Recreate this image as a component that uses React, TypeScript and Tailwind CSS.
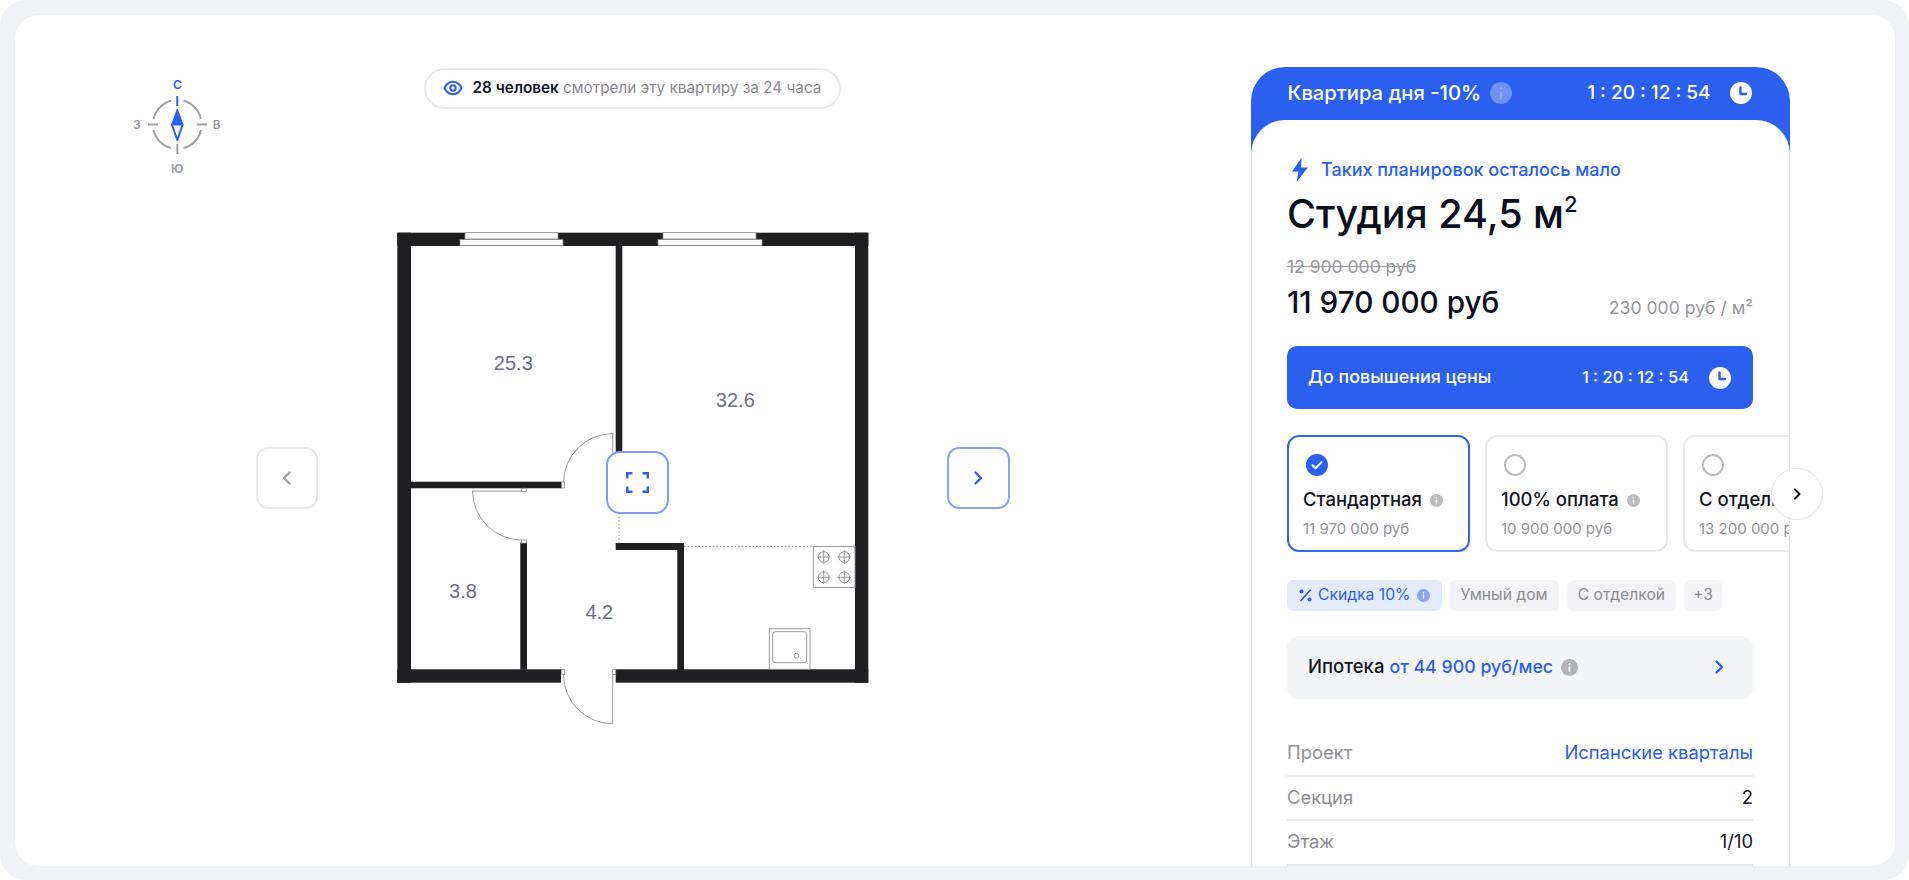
import React from "react";

const BLUE = "#2a5ff0";

function Info({ size, bg, fg = "#ffffff" }: { size: number; bg: string; fg?: string }) {
  return (
    <svg width={size} height={size} viewBox="0 0 20 20" className="shrink-0">
      <circle cx="10" cy="10" r="10" fill={bg} />
      <rect x="9" y="8.6" width="2" height="6.4" rx="1" fill={fg} />
      <circle cx="10" cy="6" r="1.25" fill={fg} />
    </svg>
  );
}

function Clock({ bg, fg }: { bg: string; fg: string }) {
  return (
    <svg width="22" height="22" viewBox="0 0 22 22" className="shrink-0">
      <circle cx="11" cy="11" r="11" fill={bg} />
      <path d="M10.500 5.500v6.500h5.500" fill="none" stroke={fg} strokeWidth="2.400" strokeLinecap="round" strokeLinejoin="round" />
    </svg>
  );
}

function Timer({ className }: { className: string }) {
  return <span className={className}>1 : 20 : 12 : 54</span>;
}

function Chevron({ dir, color, size = 24 }: { dir: "l" | "r"; color: string; size?: number }) {
  return (
    <svg width={size} height={size} viewBox="0 0 24 24" fill="none" stroke={color} strokeWidth="2.400" strokeLinecap="round" strokeLinejoin="round">
      <path d={dir === "r" ? "M9.500 6.500 15 12l-5.500 5.500" : "M14.500 6.500 9 12l5.500 5.500"} />
    </svg>
  );
}

function Compass() {
  const arc = "#a3a3a6";
  return (
    <svg width="120" height="108" viewBox="117 70 120 108" className="shrink-0">
      <g fill="none" stroke={arc} strokeWidth="2">
        <path d="M171 99.800A24 24 0 0 0 153.600 118" />
        <path d="M183.600 99.800A24 24 0 0 1 201 118" />
        <path d="M153.600 129A24 24 0 0 0 171 147" />
        <path d="M201 129A24 24 0 0 1 183.600 147" />
        <path d="M148 123.500h10M197 123.500h10M177.300 143v10" />
      </g>
      <path d="M177.300 95v10" stroke={BLUE} strokeWidth="2" />
      <path d="M177.300 108l5.600 15.500H171.700z" fill={BLUE} stroke={BLUE} strokeWidth="1" strokeLinejoin="round" />
      <path d="M171.900 123.500h10.800L177.300 139z" fill="#fff" stroke={BLUE} strokeWidth="2" strokeLinejoin="round" />
      <g fontSize="12" fontWeight="600" textAnchor="middle">
        <text x="177.300" y="88" fill={BLUE}>С</text>
        <text x="136.700" y="128" fill="#9b9ba0">З</text>
        <text x="216.700" y="128" fill="#9b9ba0">В</text>
        <text x="177.300" y="172" fill="#9b9ba0">Ю</text>
      </g>
    </svg>
  );
}

function Plan() {
  const wall = "#1f1f22";
  const thin = "#8f8f92";
  const burners: [number, number][] = [[823.7, 557], [844.3, 557], [823.7, 577.3], [844.3, 577.3]];
  return (
    <svg width="629" height="493" viewBox="318 232 629 493">
      <g fill={wall}>
        <rect x="397.300" y="232.700" width="471" height="13.300" />
        <rect x="397.300" y="232.700" width="13.700" height="450" />
        <rect x="855" y="232.700" width="13.300" height="450" />
        <rect x="397.300" y="669.300" width="163.700" height="13.400" />
        <rect x="615.700" y="669.300" width="252.600" height="13.400" />
        <rect x="615.700" y="246" width="6.600" height="220" />
        <rect x="411" y="481.700" width="150.700" height="6.600" />
        <rect x="520.300" y="542.700" width="6.700" height="127" />
        <rect x="615.700" y="543" width="68.300" height="7" />
        <rect x="677.300" y="543" width="6.700" height="127" />
      </g>
      <g fill="#fff" stroke={thin} strokeWidth="0.8">
        <rect x="465" y="232.700" width="93" height="6.300" />
        <rect x="460" y="239.600" width="103" height="5.800" />
        <rect x="663" y="232.700" width="93" height="6.300" />
        <rect x="658" y="239.600" width="104" height="5.800" />
        <rect x="561.700" y="482" width="3" height="6" />
        <rect x="521.500" y="488.300" width="5.200" height="3" />
        <rect x="521.500" y="540" width="5.200" height="3" />
        <rect x="561.700" y="669.500" width="3" height="5" />
        <rect x="612.700" y="669.500" width="3" height="5" />
      </g>
      <g fill="none" stroke={thin} strokeWidth="0.9">
        <path d="M563.500 482A49.500 49.500 0 0 1 612.700 433.500V482" />
        <path d="M521.700 491H472.500A49.500 49.500 0 0 0 521.700 540" />
        <path d="M563.500 675A49 49 0 0 0 612.700 723.700V675" />
        <path d="M684 546.400H813.300M619 513V543" strokeDasharray="1.600 2" />
        <rect x="813.300" y="546.400" width="41.700" height="41" />
        <rect x="769.300" y="628.700" width="40.700" height="40.600" />
        <rect x="772.700" y="631.700" width="34" height="31" rx="2.500" />
        <circle cx="796.300" cy="655.700" r="2.400" />
        {burners.map(([x, y]) => (
          <g key={x + "-" + y}>
            <circle cx={x} cy={y} r="5.400" />
            <path d={`M${x - 6.8} ${y}h13.600M${x} ${y - 6.8}v13.600`} />
          </g>
        ))}
      </g>
      <g fontSize="20" fill="#6d7180" textAnchor="middle" fontFamily="'Liberation Sans', sans-serif">
        <text x="513.300" y="369.500">25.3</text>
        <text x="735.300" y="406.500">32.6</text>
        <text x="463" y="598">3.8</text>
        <text x="599.300" y="618.500">4.2</text>
      </g>
    </svg>
  );
}

function Variant({ name, price, active }: { name: string; price: string; active?: boolean }) {
  return (
    <div className={`w-[182.500px] h-[117px] shrink-0 rounded-xl pl-[14px] pt-[17px] overflow-hidden ${active ? "border-2 border-[#3566e4]" : "border-2 border-[#e9e9ec]"}`}>
      {active ? (
        <svg width="22" height="22" viewBox="0 0 22 22" className="ml-[3px]">
          <circle cx="11" cy="11" r="11" fill={BLUE} />
          <path d="M6.500 11.300l3 3 6-6.200" fill="none" stroke="#fff" strokeWidth="2" strokeLinecap="round" strokeLinejoin="round" />
        </svg>
      ) : (
        <div className="ml-[3px] w-[22px] h-[22px] rounded-full border-2 border-[#bdbdc1]" />
      )}
      <div className="mt-[12px] flex items-center gap-[8px] h-[24px] whitespace-nowrap">
        <span className="text-[18.500px] font-medium text-[#14151f]">{name}</span>
        <Info size={13} bg="#bcbcc0" />
      </div>
      <div className="mt-[6px] text-[15px] leading-[22px] text-[#94949a] whitespace-nowrap">{price}</div>
    </div>
  );
}

function Row({ label, value, blue, line }: { label: string; value: string; blue?: boolean; line?: boolean }) {
  return (
    <div className={`flex justify-between items-center h-[44.500px] text-[18.400px] shrink-0 ${line ? "border-b-2 border-[#e9e9ec]" : ""}`}>
      <span className="text-[#8f8f94]">{label}</span>
      <span className={blue ? "text-[#2a5ff0]" : "text-[#14151f]"}>{value}</span>
    </div>
  );
}

function Tag({ children, tight }: { children: React.ReactNode; tight?: boolean }) {
  return <div className={`h-[31px] flex items-center rounded-md bg-[#f4f4f6] text-[15.700px] text-[#8c8c92] whitespace-nowrap ${tight ? "px-[9px]" : "px-[11px]"}`}>{children}</div>;
}

export default function App() {
  return (
    <div className="h-[880px] w-full bg-white font-['Inter',_sans-serif]">
      <div className="h-full rounded-[26px] bg-[#f0f2f5] p-[14.500px]">
        <div className="h-full rounded-[24px] bg-white flex overflow-hidden">
          <div className="flex-1 flex flex-col pt-[53px]">
            <div className="grid grid-cols-[1fr_auto_1fr] items-start h-[164px]">
              <div className="pl-[102px] pt-[3px]"><Compass /></div>
              <div className="h-[41.500px] rounded-full border-2 border-[#e9eaed] flex items-center pl-[17px] pr-[18px] gap-[10px] whitespace-nowrap text-[15.300px]">
                <svg width="20" height="20" viewBox="0 0 20 20" fill="none" stroke={BLUE} strokeWidth="2">
                  <path d="M1.500 10C3.400 5.800 6.400 3.800 10 3.800s6.600 2 8.500 6.200c-1.900 4.200-4.900 6.200-8.500 6.200S3.400 14.200 1.500 10z" />
                  <circle cx="10" cy="10" r="2.700" />
                </svg>
                <span className="text-[#8b8b90]"><span className="font-semibold text-[#14151f]">28 человек</span> смотрели эту квартиру за 24 часа</span>
              </div>
              <div />
            </div>
            <div className="flex items-center justify-center">
              <button className="w-[62.500px] h-[62.500px] rounded-xl border-2 border-[#e9e9ec] flex items-center justify-center">
                <Chevron dir="l" color="#a6a6aa" />
              </button>
              <div className="relative w-[629px] h-[493px]">
                <Plan />
                <button className="absolute left-[288px] top-[219px] w-[63px] h-[63px] rounded-[14px] border-2 border-[#7f9df2] bg-white flex items-center justify-center">
                  <svg width="23" height="21" viewBox="0 0 23 21" fill="none" stroke={BLUE} strokeWidth="2.400">
                    <path d="M1.200 6.500V1.200H6.500M16.500 1.200H21.800V6.500M21.800 14.500V19.800H16.500M6.500 19.800H1.200V14.500" />
                  </svg>
                </button>
              </div>
              <button className="w-[62.500px] h-[62.500px] rounded-xl border-2 border-[#8ba5f3] flex items-center justify-center">
                <Chevron dir="r" color={BLUE} />
              </button>
            </div>
          </div>

          <div className="w-[644px] shrink-0 pt-[52.500px]">
            <div className="relative w-[539px] h-[900px] rounded-t-[34px] bg-[#2a5ff0] flex flex-col">
              <div className="h-[52.500px] shrink-0 flex items-center pl-[37px] text-white">
                <span className="text-[20.200px] font-medium whitespace-nowrap">Квартира дня -10%</span>
                <span className="ml-[9px]"><Info size={22} bg="#6e92f5" fg="#94aff8" /></span>
                <Timer className="ml-auto text-[19px] font-medium whitespace-nowrap" />
                <span className="ml-[19px] mr-[38px]"><Clock bg="#ffffff" fg={BLUE} /></span>
              </div>
              <div className="flex-1 rounded-t-[34px] bg-white border-x border-[#e5e7eb] pl-[35.500px] pr-[35.500px] pt-[38px]">
                <div className="flex items-center gap-[13px] h-[24px]">
                  <svg width="18" height="24" viewBox="0 0 18 24" fill={BLUE} className="ml-[4px] -mr-[1px]"><path d="M10.500 0 1 13.500h6.500L5.500 24 17 9.500h-7z" /></svg>
                  <span className="text-[18px] font-medium text-[#2a5ff0] whitespace-nowrap">Таких планировок осталось мало</span>
                </div>
                <div className="mt-[8px] text-[39.500px] leading-[48px] font-medium text-[#0c0e1c] whitespace-nowrap">
                  Студия 24,5 м<sup className="text-[22px] top-[-16px] leading-none">2</sup>
                </div>
                <div className="mt-[17px] text-[17.500px] leading-[24px] text-[#97979c] line-through whitespace-nowrap">12 900 000 руб</div>
                <div className="mt-[2px] flex items-end justify-between h-[42px]">
                  <span className="text-[29.700px] leading-[42px] font-medium text-[#0c0e1c] whitespace-nowrap">11 970 000 руб</span>
                  <span className="text-[17.600px] leading-[30px] text-[#97979c] whitespace-nowrap">230 000 руб / м²</span>
                </div>
                <div className="mt-[23.500px] h-[63px] rounded-[10px] bg-[#2a5ff0] flex items-center pl-[21px] pr-[22px] text-white">
                  <span className="text-[17.900px] font-medium whitespace-nowrap">До повышения цены</span>
                  <Timer className="ml-auto text-[16.500px] font-medium whitespace-nowrap" />
                  <span className="ml-[20px]"><Clock bg="#ffffff" fg={BLUE} /></span>
                </div>
                <div className="mt-[26px] -mr-[35.500px] overflow-hidden flex gap-[15.500px]">
                  <Variant name="Стандартная" price="11 970 000 руб" active />
                  <Variant name="100% оплата" price="10 900 000 руб" />
                  <Variant name="С отделкой" price="13 200 000 руб" />
                </div>
                <div className="mt-[27.500px] flex gap-[8px]">
                  <div className="h-[31px] flex items-center gap-[6px] rounded-md bg-[#e3ebfd] pl-[12px] pr-[12px] text-[15.700px] text-[#2a5ff0] whitespace-nowrap">
                    <svg width="13" height="13" viewBox="0 0 13 13" fill={BLUE}>
                      <circle cx="2.500" cy="2.500" r="2" />
                      <circle cx="10.500" cy="10.500" r="2" />
                      <path d="M2 11.500 11 1.500" stroke={BLUE} strokeWidth="1.800" strokeLinecap="round" />
                    </svg>
                    <span>Скидка 10%</span>
                    <Info size={13} bg="#88a6f5" />
                  </div>
                  <Tag>Умный дом</Tag>
                  <Tag>С отделкой</Tag>
                  <Tag tight>+3</Tag>
                </div>
                <div className="mt-[25.500px] h-[62.500px] rounded-xl bg-[#f4f5f7] flex items-center pl-[21px] pr-[22px] font-medium whitespace-nowrap">
                  <span className="text-[18.500px] text-[#14151f]">Ипотека</span>
                  <span className="ml-[5px] text-[17.800px] text-[#2a5ff0]">от 44 900 руб/мес</span>
                  <span className="ml-[8px]"><Info size={17} bg="#b3b3b8" /></span>
                  <span className="ml-auto"><Chevron dir="r" color={BLUE} /></span>
                </div>
                <div className="mt-[33.500px] flex flex-col">
                  <Row label="Проект" value="Испанские кварталы" blue line />
                  <Row label="Секция" value="2" line />
                  <Row label="Этаж" value="1/10" line />
                </div>
              </div>
              <button className="absolute left-[520.500px] top-[401px] w-[52px] h-[52px] rounded-full bg-white border border-[#e5e7eb] flex items-center justify-center">
                <Chevron dir="r" color="#14151f" size={20} />
              </button>
            </div>
          </div>
        </div>
      </div>
    </div>
  );
}
